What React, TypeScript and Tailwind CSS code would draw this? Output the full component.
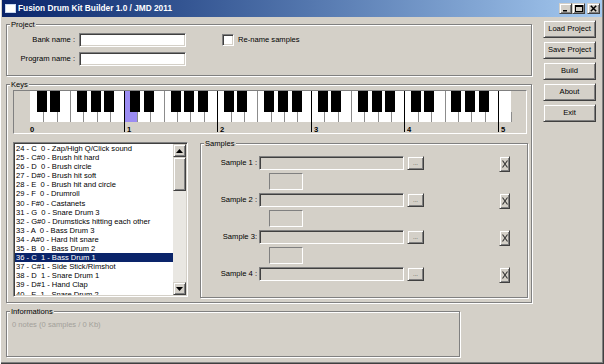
import type { ReactNode } from "react";

const NOTE_NAMES = ["C  ", "C#", "D  ", "D#", "E  ", "F  ", "F#", "G  ", "G#", "A  ", "A#", "B  "];

// only the rows that show in the list box
const DRUMS = [
  "Zap/High Q/Click sound",
  "Brush hit hard",
  "Brush circle",
  "Brush hit soft",
  "Brush hit and circle",
  "Drumroll",
  "Castanets",
  "Snare Drum 3",
  "Drumsticks hitting each other",
  "Bass Drum 3",
  "Hard hit snare",
  "Bass Drum 2",
  "Bass Drum 1",
  "Side Stick/Rimshot",
  "Snare Drum 1",
  "Hand Clap",
  "Snare Drum 2",
];

const raised =
  "bg-[#d4d0c8] border border-t-[#d4d0c8] border-l-[#d4d0c8] border-r-[#404040] border-b-[#404040] shadow-[inset_1px_1px_0_#fff,inset_-1px_-1px_0_#808080]";
const sunken =
  "border border-t-[#808080] border-l-[#808080] border-r-white border-b-white shadow-[inset_1px_1px_0_#404040,inset_-1px_-1px_0_#d4d0c8]";

function GroupBox({
  title,
  className,
  children,
}: {
  title: string;
  className: string;
  children?: ReactNode;
}) {
  return (
    <fieldset
      className={`border border-[#808080] shadow-[inset_1px_1px_0_#fff,1px_1px_0_#fff] ${className}`}
    >
      <legend className="ml-[3px] bg-[#d4d0c8] px-[1px] text-[7.6px] leading-[9px]">
        {title}
      </legend>
      {children}
    </fieldset>
  );
}

function TitleButton({ children, className = "" }: { children: ReactNode; className?: string }) {
  return (
    <div className={`flex h-[11px] w-[13px] items-center justify-center ${raised} ${className}`}>
      {children}
    </div>
  );
}

function TitleBar() {
  return (
    <div className="mx-[1px] flex h-[17px] items-center bg-gradient-to-r from-[#0a246a] to-[#a6caf0] pl-[3px] pr-[2px]">
      <div className="h-[9px] w-[11px] border border-[#c8d8f0] bg-white" />
      <span className="ml-[2px] text-[8.3px] font-bold text-white">
        Fusion Drum Kit Builder 1.0 / JMD 2011
      </span>
      <div className="ml-auto flex items-center">
        <TitleButton>
          <svg width="7" height="7" viewBox="0 0 7 7">
            <rect x="1" y="5" width="4" height="1.5" fill="#000" />
          </svg>
        </TitleButton>
        <TitleButton>
          <svg width="8" height="7" viewBox="0 0 8 7">
            <rect x="0.5" y="0.5" width="7" height="6" fill="none" stroke="#000" />
            <rect x="0.5" y="0.5" width="7" height="1.5" fill="#000" />
          </svg>
        </TitleButton>
        <TitleButton className="ml-[2px]">
          <svg width="7" height="7" viewBox="0 0 7 7">
            <path d="M0.8 0.8 L6.2 6.2 M6.2 0.8 L0.8 6.2" stroke="#000" strokeWidth="1.5" />
          </svg>
        </TitleButton>
      </div>
    </div>
  );
}

const OCT = 93.6;
const W = OCT / 7;
const X0 = 16;
const BLACK_OFFSETS = [6.8, 20, 47, 60.8, 74.3];

function Keyboard() {
  const whites = 36;
  const seps: ReactNode[] = [];
  for (let i = 1; i <= whites; i++) {
    const x = Math.round(X0 + i * W) + 0.5;
    const m = i % 7;
    const isC = m === 0 && i < whites;
    const full = m === 0 || m === 3;
    seps.push(
      <line
        key={`s${i}`}
        x1={x}
        x2={x}
        y1={full ? 0 : 21}
        y2={isC ? 41 : 31}
        stroke={isC ? "#000" : "#8c8c8c"}
        strokeWidth={1}
      />
    );
  }
  const blacks: ReactNode[] = [];
  for (let o = 0; o < 5; o++) {
    BLACK_OFFSETS.forEach((off, k) => {
      blacks.push(
        <rect
          key={`b${o}-${k}`}
          x={Math.round(X0 + o * OCT + off)}
          y={0}
          width={10}
          height={21}
          fill="#000"
        />
      );
    });
  }
  const nums: ReactNode[] = [];
  for (let o = 0; o <= 5; o++) {
    nums.push(
      <text
        key={`n${o}`}
        x={o === 0 ? X0 : Math.round(X0 + o * OCT) + 3}
        y={41}
        fontSize="7.6"
        fontWeight="bold"
        fontFamily="'Liberation Sans', Arial, sans-serif"
        fill="#000"
      >
        {o}
      </text>
    );
  }
  return (
    <svg width="512" height="42" viewBox="0 0 512 42" className="block">
      <rect x={X0} y={0} width={Math.round(whites * W)} height={31} fill="#fff" />
      <rect x={Math.round(X0 + 7 * W) + 1} y={0} width={Math.round(W)} height={31} fill="#9b8cf2" />
      {seps}
      {blacks}
      {nums}
    </svg>
  );
}

function NoteList() {
  return (
    <div className={`ml-[6px] mt-[3px] flex h-[155px] w-[175px] bg-white p-[1px] ${sunken}`}>
      <div className="flex-1 overflow-hidden">
        {DRUMS.map((d, i) => {
          const n = 24 + i;
          const name = `${NOTE_NAMES[n % 12]}${Math.floor(n / 12) - 2}`;
          const sel = n === 36;
          return (
            <div
              key={n}
              className={`h-[9.1px] whitespace-pre px-[1px] text-[7.6px] leading-[9.1px] ${
                sel ? "bg-[#0a246a] text-white" : "text-black"
              }`}
            >
              {`${n} - ${name} - ${d}`}
            </div>
          );
        })}
      </div>
      <div className="flex w-[13px] flex-col">
        <div className={`flex h-[13px] items-center justify-center ${raised}`}>
          <svg width="7" height="4" viewBox="0 0 7 4">
            <path d="M3.5 0 L7 4 L0 4 Z" fill="#000" />
          </svg>
        </div>
        <div className={`h-[34px] ${raised}`} />
        <div className="flex-1 bg-[#e9e7e2]" />
        <div className={`flex h-[13px] items-center justify-center ${raised}`}>
          <svg width="7" height="4" viewBox="0 0 7 4">
            <path d="M0 0 L7 0 L3.5 4 Z" fill="#000" />
          </svg>
        </div>
      </div>
    </div>
  );
}

function SampleRows() {
  const labels = ["Sample 1 :", "Sample 2 :", "Sample 3:", "Sample 4 :"];
  return (
    <div className="flex flex-col pt-[8px]">
      {labels.map((label, i) => (
        <div key={label} className={i < 3 ? "h-[37px]" : ""}>
          <div className="flex h-[17px] items-start">
            <span className="w-[56px] text-right text-[7.6px] leading-[14px]">{label}</span>
            <div className={`ml-[2px] h-[14px] w-[145px] bg-[#d4d0c8] ${sunken}`} />
            <button
              type="button"
              className={`ml-[3px] flex h-[14px] w-[17px] items-end justify-center pb-[3px] text-[6px] leading-[6px] text-[#404040] ${raised}`}
            >
              ...
            </button>
            <button
              type="button"
              className={`ml-[75px] flex h-[16px] w-[11px] items-center justify-center ${raised}`}
            >
              <svg width="6" height="8" viewBox="0 0 6 8">
                <path d="M0.5 0.5 L5.5 7.5 M5.5 0.5 L0.5 7.5" stroke="#333" strokeWidth="1.1" />
              </svg>
            </button>
          </div>
          {i < 3 && (
            <div className="ml-[68px] h-[17px] w-[34px] border border-t-[#808080] border-l-[#808080] border-r-white border-b-white" />
          )}
        </div>
      ))}
    </div>
  );
}

function SideButton({ label }: { label: string }) {
  return (
    <button
      type="button"
      className={`flex h-[18px] w-[53px] items-center justify-center text-[7.6px] text-black ${raised}`}
    >
      {label}
    </button>
  );
}

export default function App() {
  return (
    <div className="flex h-[364px] w-[604px] flex-col overflow-hidden bg-[#d4d0c8] px-[1px] font-['Liberation_Sans',Arial,sans-serif] text-[7.6px] text-black shadow-[inset_1px_0_0_#fff,inset_-1px_-1px_0_#404040,inset_-2px_-2px_0_#808080]">
      <TitleBar />
      <div className="flex pl-[5px] pt-[3px]">
        <div className="flex w-[526px] flex-col">
          <GroupBox title="Project" className="h-[56px]">
            <div className="flex pt-[4px]">
              <div className="flex flex-col gap-[5px]">
                {["Bank name :", "Program name :"].map((l) => (
                  <div key={l} className="flex items-center">
                    <span className="w-[68px] text-right leading-[14px]">{l}</span>
                    <div className={`ml-[4px] h-[14px] w-[107px] bg-white ${sunken}`} />
                  </div>
                ))}
              </div>
              <div className="ml-[36px] mt-[1px] flex h-[12px] items-center">
                <div className={`h-[12px] w-[12px] bg-white ${sunken}`} />
                <span className="ml-[4px]">Re-name samples</span>
              </div>
            </div>
          </GroupBox>

          <GroupBox title="Keys" className="mt-[4px] h-[223px]">
            <div className="ml-[6px] mt-[1px] h-[44px] w-[514px] border border-t-[#808080] border-l-[#808080] border-r-white border-b-white">
              <Keyboard />
            </div>
            <div className="mt-[5px] flex items-start">
              <NoteList />
              <GroupBox title="Samples" className="ml-[12px] h-[159px] w-[328px]">
                <SampleRows />
              </GroupBox>
            </div>
          </GroupBox>

          <GroupBox title="Informations" className="mt-[4px] h-[50px] w-[454px]">
            <div className="pl-[5px] pt-[3px] text-[#a3a09a]">0 notes (0 samples / 0 Kb)</div>
          </GroupBox>
        </div>

        <div className="ml-[11px] flex flex-col gap-[3px]">
          <SideButton label="Load Project" />
          <SideButton label="Save Project" />
          <SideButton label="Build" />
          <SideButton label="About" />
          <SideButton label="Exit" />
        </div>
      </div>
    </div>
  );
}
